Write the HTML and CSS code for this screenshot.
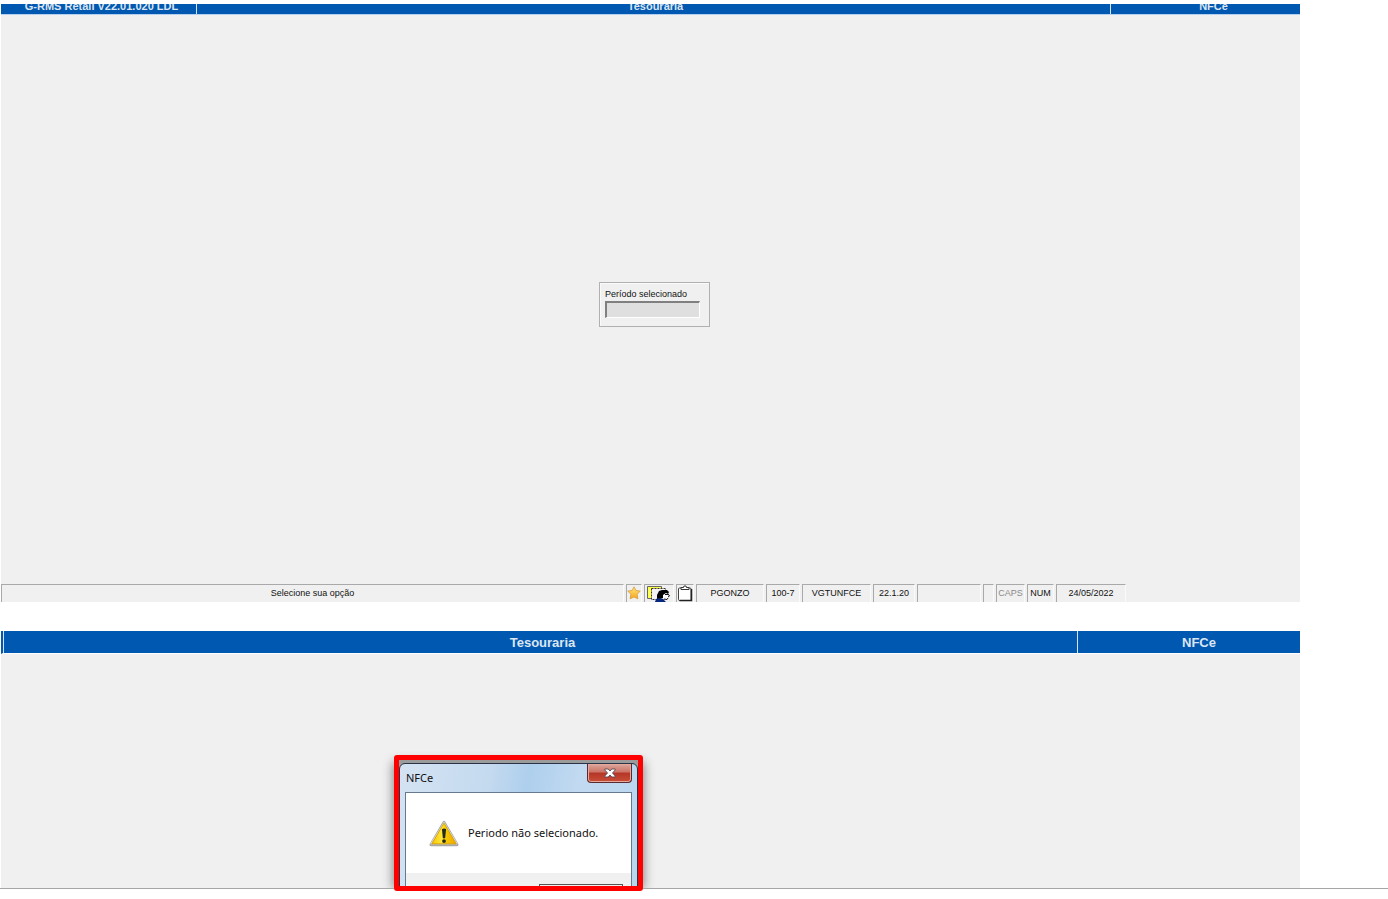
FILE: index.html
```html
<!DOCTYPE html>
<html lang="pt-BR">
<head>
<meta charset="utf-8">
<title>Tesouraria - NFCe</title>
<link rel="stylesheet" href="styles.css">
</head>
<body>
<main class="page">
  <section class="screen screen-main">
    <header class="bar bar-small">
      <span class="bar-cell bar-product">G-RMS Retail V22.01.020 LDL</span>
      <span class="bar-cell bar-title">Tesouraria</span>
      <span class="bar-cell bar-module">NFCe</span>
    </header>
    <div class="workspace">
      <div class="period">
        <label class="period-label" for="period">Período selecionado</label>
        <input class="period-input" id="period" type="text" readonly>
      </div>
    </div>
    <footer class="status">
      <span class="cell cell-message">Selecione sua opção</span>
      <button class="cell cell-star" type="button" aria-label="Favoritos">
        <svg width="14" height="14" viewBox="0 0 14 14"><defs><linearGradient id="gold" x2="0" y2="1"><stop offset="0" stop-color="#ffea80"/><stop offset="1" stop-color="#f5a51c"/></linearGradient></defs><path d="M7 .8l1.900 3.700 4.400.6-3.200 3 .8 4.700L7 11l-3.900 1.800.8-4.700-3.200-3 4.400-.6z" fill="url(#gold)" stroke="#d99a3c" stroke-width=".8" stroke-linejoin="round"/></svg>
      </button>
      <button class="cell cell-user" type="button" aria-label="Usuário">
        <svg width="26" height="17" viewBox="0 0 26 17"><path d="M1.500 1.500h14v12h-14z" fill="#ffff50" stroke="#666"/><path d="M5.500 3.500h14v11h-14z" fill="#f4f4f4" stroke="#333" stroke-dasharray="2 1"/><path d="M11 10l2-4 3-1 5 0 2 2-1 2-4 1-1 3-3 1-3 0z" fill="#050505"/><path d="M17 10l3-2 2 1 1 2-1 3-3 1-2-2z" fill="#fff"/><path d="M19 9.500h3M22 9l1.500 2-1.500 1M18 14l3 .5 1-1.500" stroke="#111" fill="none"/><path d="M9 17l1-3 3-1 4 1 3 3z" fill="#08287c"/></svg>
      </button>
      <button class="cell cell-clip" type="button" aria-label="Área de transferência">
        <svg width="16" height="17" viewBox="0 0 16 17"><rect x="1.500" y="3" width="12.500" height="12.500" rx="1" fill="#fff" stroke="#444"/><path d="M14.500 4v11.500H2.500" fill="none" stroke="#222" stroke-width="1.500"/><path d="M4 4.500V2.500h2.500L7 1h2l.5 1.500H12v2z" fill="#fff" stroke="#333"/></svg>
      </button>
      <span class="cell cell-user-name">PGONZO</span>
      <span class="cell cell-store">100-7</span>
      <span class="cell cell-program">VGTUNFCE</span>
      <span class="cell cell-version">22.1.20</span>
      <span class="cell cell-blank"></span>
      <span class="cell cell-narrow"></span>
      <span class="cell cell-caps">CAPS</span>
      <span class="cell cell-num">NUM</span>
      <span class="cell cell-date">24/05/2022</span>
    </footer>
  </section>

  <section class="screen screen-alert">
    <header class="bar bar-large">
      <span class="bar-cell bar-title">Tesouraria</span>
      <span class="bar-cell bar-module">NFCe</span>
    </header>
    <div class="highlight">
      <div class="dialog" role="alertdialog" aria-labelledby="dialog-title" aria-describedby="dialog-text">
        <div class="dialog-head">
          <span class="dialog-title" id="dialog-title">NFCe</span>
          <button class="dialog-close" type="button" aria-label="Fechar">
            <svg width="12" height="10" viewBox="0 0 12 10"><path d="M.8 1h3.400L6 3l1.800-2h3.400v1L8.500 5l2.700 3v1H7.800L6 7 4.200 9H.8V8l2.700-3L.8 2z" fill="#fff" stroke="#574a55" stroke-width=".9"/></svg>
          </button>
        </div>
        <div class="dialog-content">
          <div class="dialog-body">
            <svg width="30" height="27" viewBox="0 0 32 28"><defs><linearGradient id="warn" x2="1" y2="0"><stop offset="0" stop-color="#f8c400"/><stop offset=".4" stop-color="#ffe838"/><stop offset=".55" stop-color="#f8cc00"/><stop offset="1" stop-color="#f0a400"/></linearGradient></defs><path d="M16 2L30 26H2z" fill="#aaa" stroke="#a8a8a8" stroke-width="3" stroke-linejoin="round"/><path d="M16 2L30 25H2z" fill="#ddd" stroke="#ddd" stroke-linejoin="round"/><path d="M16 3L29 25H3z" fill="url(#warn)" stroke="#d9a000" stroke-linejoin="round"/><path d="M13.800 9.500q2.200-1.500 4.400 0l-1 9.500h-2.400z" fill="#222a20"/><circle cx="16" cy="22" r="2" fill="#222a20"/></svg>
            <span class="dialog-text" id="dialog-text">Periodo não selecionado.</span>
          </div>
          <div class="dialog-actions"><button class="dialog-ok" type="button" aria-label="OK"></button></div>
        </div>
      </div>
    </div>
  </section>
</main>
</body>
</html>
```
FILE: styles.css
```css
* { box-sizing: border-box; }
body {
  margin: 0;
  min-height: 100vh;
  background: #fff;
  color: #111;
  font-family: "Liberation Sans", Arial, sans-serif;
  font-size: 9px;
}
button { padding: 0; font: inherit; }
svg { display: block; flex: none; }
.page { padding-top: 4px; border-bottom: 1px solid #a6a6a6; }
.screen {
  display: flex;
  flex-direction: column;
  margin-right: 88px;
  margin-left: 1px;
  background: #f0f0f0;
}
.screen-main { min-height: 598px; }
.screen-alert { position: relative; min-height: 257px; margin-top: 29px; }

.bar {
  display: flex;
  background: #0058b1;
  color: #dce6f2;
  font-weight: bold;
  text-align: center;
}
.bar-cell + .bar-cell { border-left: 1px solid #d5e4f5; }
.bar-title { flex: 1; padding-left: 4px; }
.bar-small {
  height: 11px;
  overflow: hidden;
  align-items: flex-end;
  border-bottom: 1px solid #b5d0ee;
  font-size: 11px;
  line-height: 16px;
}
.bar-small .bar-product { width: 195px; padding-left: 6px; }
.bar-small .bar-module { width: 190px; padding-left: 16px; }
.bar-large {
  height: 23px;
  border-bottom: 1px solid #fff;
  border-left: 2px solid #0058b1;
  font-size: 13px;
  line-height: 24px;
}
.bar-large .bar-title { border-left: 1px solid #d5e4f5; }
.bar-large .bar-module { width: 223px; padding-left: 20px; }

.workspace {
  flex: 1;
  display: grid;
  place-content: center;
  padding: 9px 0 0 8px;
}
.period {
  display: flex;
  flex-direction: column;
  width: 111px;
  height: 45px;
  padding: 5px;
  border: 1px solid #b0b0b0;
  box-shadow: inset 1px 1px #fafafa;
}
.period-label { padding-bottom: 1px; line-height: 12px; }
.period-input {
  width: 95px;
  height: 17px;
  border: 1px solid #fff;
  border-top: 2px solid #808080;
  border-left: 2px solid #808080;
  background: #dfdfdf;
  outline: 0;
}

.status {
  display: flex;
  gap: 2px;
  height: 18px;
  padding-right: 174px;
  line-height: 16px;
}
.cell {
  display: flex;
  justify-content: center;
  align-items: flex-start;
  border: 0 solid #a9a9a9;
  border-width: 1px 0 0 1px;
  border-right: 1px solid #fafafa;
  background: #f0f0f0;
  white-space: nowrap;
}
.cell-message { flex: 1; }
.cell-star { width: 16px; padding-top: 1px; }
.cell-user { width: 30px; }
.cell-clip { width: 18px; }
.cell-user-name { width: 68px; }
.cell-store { width: 34px; }
.cell-program { width: 69px; }
.cell-version { width: 42px; }
.cell-blank { width: 64px; }
.cell-narrow { width: 11px; }
.cell-caps { width: 29px; color: #8a8a8a; }
.cell-num { width: 27px; }
.cell-date { width: 70px; }

.highlight {
  position: absolute;
  z-index: 1;
  top: 124px;
  left: 393px;
  width: 249px;
  height: 136px;
  overflow: hidden;
  border: 5px solid #f00;
  border-radius: 3px;
  background: #9b9b9b;
}
.screen-alert::after {
  content: "";
  position: absolute;
  top: 132px;
  bottom: 0;
  left: 393px;
  width: 249px;
  box-shadow: 0 0 10px 1px rgba(0, 0, 0, .45);
  clip-path: inset(-12px -16px 0);
}
.dialog {
  height: 140px;
  margin-top: 3px;
  padding: 0 5px;
  border: 1px solid #283445;
  border-radius: 6px 6px 0 0;
  background: linear-gradient(100deg, #d4e3f3, #c4daef 35%, #aecfed 50%, #c2daf1 70%, #b9d5ee);
  font-family: "Noto Sans", "Open Sans", sans-serif;
  font-size: 11px;
}
.dialog-head {
  display: flex;
  justify-content: space-between;
  height: 28px;
}
.dialog-title { padding-left: 1px; line-height: 27px; }
.dialog-close {
  display: grid;
  place-items: center;
  width: 45px;
  height: 19px;
  border: 1px solid #5b2930;
  border-top: 0;
  border-radius: 0 0 4px 4px;
  background: linear-gradient(#dda79d, #cb7266 45%, #b53627 50%, #c84e37);
  box-shadow: inset 0 0 0 1px #e6a99c;
}
.dialog-content {
  height: 110px;
  border: 1px solid #66798d;
  background: #f0f0f0;
}
.dialog-body {
  display: flex;
  align-items: center;
  gap: 9px;
  height: 80px;
  padding-left: 23px;
  background: #fff;
}
.dialog-text { padding-bottom: 2px; }
.dialog-actions { padding: 11px 8px 0; }
.dialog-ok {
  display: block;
  width: 84px;
  height: 22px;
  margin-left: auto;
  border: 1px solid #555;
  background: #eee;
}
```
